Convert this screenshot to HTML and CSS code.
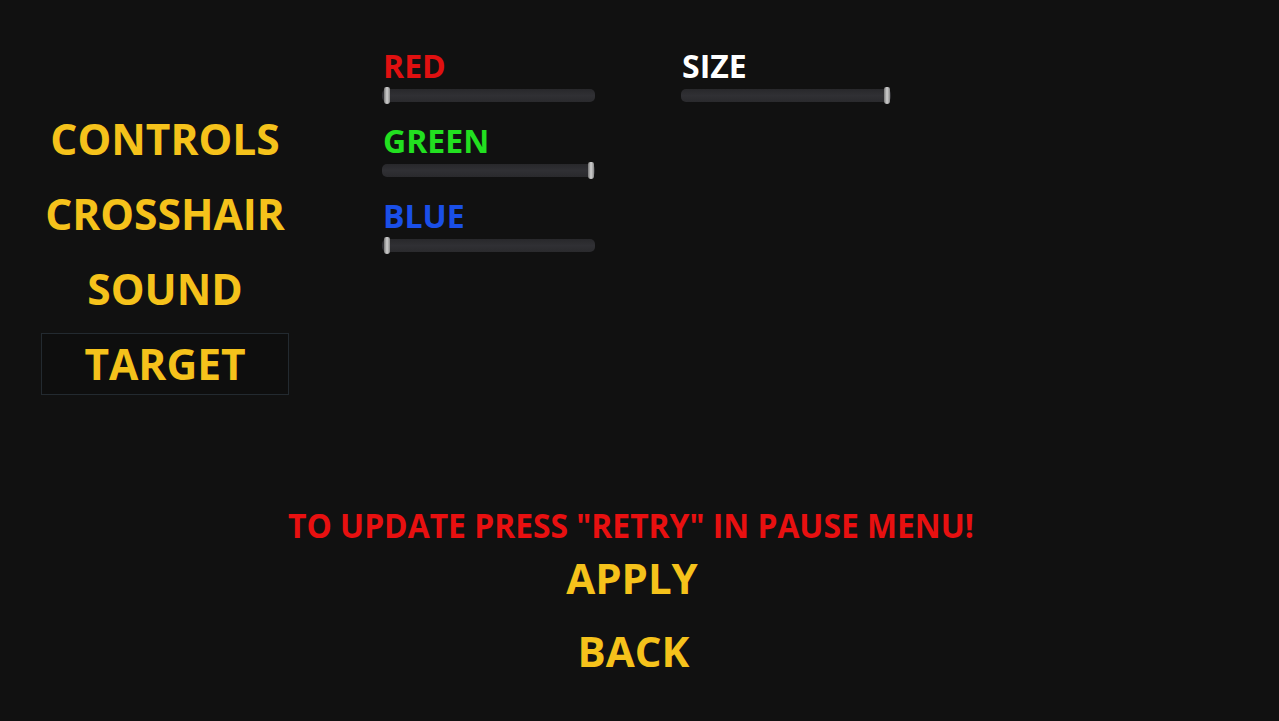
FILE: index.html
```html
<!DOCTYPE html>
<html>
<head>
<meta charset="utf-8">
<link rel="stylesheet" href="styles.css">
</head>
<body>
<div class="screen">
  <div class="top">
    <nav class="menu">
      <div class="item">CONTROLS</div>
      <div class="item">CROSSHAIR</div>
      <div class="item">SOUND</div>
      <div class="item active">TARGET</div>
    </nav>
    <div class="col col1">
      <div class="group">
        <div class="label red">RED</div>
        <div class="track"><div class="thumb min"></div></div>
      </div>
      <div class="group">
        <div class="label green">GREEN</div>
        <div class="track"><div class="thumb max"></div></div>
      </div>
      <div class="group">
        <div class="label blue">BLUE</div>
        <div class="track"><div class="thumb min"></div></div>
      </div>
    </div>
    <div class="col col2">
      <div class="group">
        <div class="label white">SIZE</div>
        <div class="track"><div class="thumb max"></div></div>
      </div>
    </div>
  </div>
  <div class="bottom">
    <div class="warn">TO UPDATE PRESS "RETRY" IN PAUSE MENU!</div>
    <div class="btn apply">APPLY</div>
    <div class="btn back">BACK</div>
  </div>
</div>
</body>
</html>
```

FILE: styles.css
```css
html, body {
  margin: 0;
  padding: 0;
  background: #111111;
}
.screen {
  width: 1279px;
  height: 721px;
  overflow: hidden;
  font-family: "Open Sans", "Liberation Sans", sans-serif;
  font-weight: 700;
  display: flex;
  flex-direction: column;
}
.top {
  display: flex;
  align-items: flex-start;
}
.menu {
  margin-left: 41px;
  margin-top: 108px;
  width: 248px;
  display: flex;
  flex-direction: column;
  gap: 13px;
}
.item {
  height: 62px;
  box-sizing: border-box;
  display: flex;
  align-items: center;
  justify-content: center;
  color: #f5c21b;
  font-size: 42.5px;
  line-height: 1;
}
.item.active {
  border: 1px solid #232a30;
  background: #0e0e0e;
}
.col {
  display: flex;
  flex-direction: column;
  margin-top: 49px;
}
.col1 {
  margin-left: 93px;
  width: 213px;
}
.col2 {
  margin-left: 86px;
  width: 210px;
}
.group {
  height: 75px;
  display: flex;
  flex-direction: column;
}
.label {
  height: 34px;
  font-size: 32px;
  line-height: 34px;
  margin-left: 1px;
}
.red { color: #e01010; }
.green { color: #22e020; }
.blue { color: #1a4fe8; }
.white { color: #ffffff; }
.track {
  margin-top: 6px;
  height: 13px;
  border-radius: 5px;
  background: linear-gradient(#28282b, #303034 50%, #2a2a2d);
  position: relative;
}
.thumb {
  position: absolute;
  top: -2px;
  width: 6px;
  height: 17px;
  border-radius: 3px 3px 4px 4px;
  background: linear-gradient(90deg, #777 0%, #d0d0d0 50%, #888 100%);
}
.thumb.min {
  left: 2px;
}
.thumb.max {
  right: 1px;
}
.bottom {
  display: flex;
  flex-direction: column;
  align-items: center;
  margin-top: 112px;
  padding-right: 18px;
}
.warn {
  color: #e81010;
  font-size: 33.5px;
  line-height: 36px;
  transform: scaleX(0.95);
}
.btn {
  color: #f5c21b;
  font-size: 42px;
  line-height: 50px;
}
.apply {
  margin-top: 10px;
  margin-left: 3px;
}
.back {
  margin-top: 23px;
  margin-left: 6px;
}
```
